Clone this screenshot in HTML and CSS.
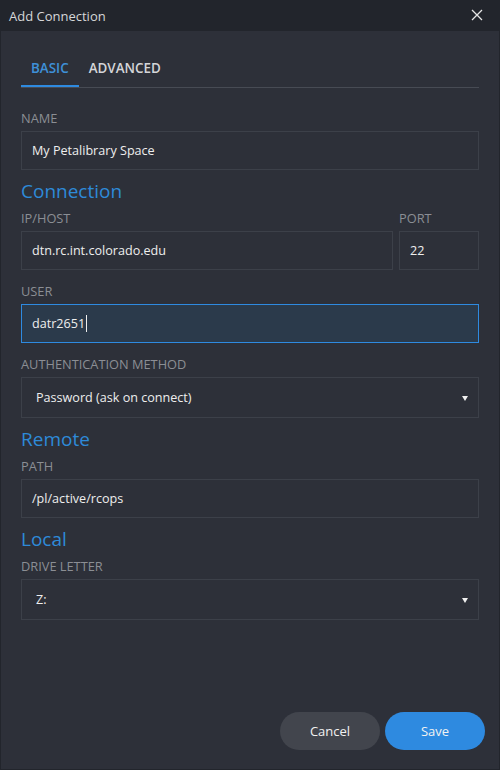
FILE: index.html
```html
<!DOCTYPE html>
<html>
<head>
<meta charset="utf-8">
<link rel="stylesheet" href="styles.css">
</head>
<body>
<div class="window">
  <div class="titlebar">
    <span class="title">Add Connection</span>
    <svg class="close" width="12" height="12" viewBox="0 0 12 12"><path d="M1 1L11 11M11 1L1 11" stroke="#e6e6e6" stroke-width="1.3" fill="none"/></svg>
  </div>
  <div class="content">
    <div class="tabs">
      <div class="tab active">BASIC</div>
      <div class="tab">ADVANCED</div>
    </div>
    <div class="field first">
      <div class="label">NAME</div>
      <div class="input">My Petalibrary Space</div>
    </div>
    <div class="heading">Connection</div>
    <div class="row">
      <div class="field tight host">
        <div class="label">IP/HOST</div>
        <div class="input">dtn.rc.int.colorado.edu</div>
      </div>
      <div class="field tight port">
        <div class="label">PORT</div>
        <div class="input">22</div>
      </div>
    </div>
    <div class="field">
      <div class="label">USER</div>
      <div class="input focused">datr2651<span class="caret"></span></div>
    </div>
    <div class="field">
      <div class="label">AUTHENTICATION METHOD</div>
      <div class="select">Password (ask on connect)<span class="arrow"></span></div>
    </div>
    <div class="heading">Remote</div>
    <div class="field tight">
      <div class="label">PATH</div>
      <div class="input">/pl/active/rcops</div>
    </div>
    <div class="heading">Local</div>
    <div class="field tight">
      <div class="label">DRIVE LETTER</div>
      <div class="select">Z:<span class="arrow"></span></div>
    </div>
    <div class="spacer"></div>
    <div class="footer">
      <button class="btn cancel">Cancel</button>
      <button class="btn save">Save</button>
    </div>
  </div>
</div>
</body>
</html>
```
FILE: styles.css
```css
* { box-sizing: border-box; }
html, body { margin: 0; padding: 0; }
body {
  background: #22252c;
  font-family: "Segoe UI", "Open Sans", "Noto Sans", sans-serif;
  font-size: 13px;
  color: #e6e6e6;
}
.window {
  width: 500px;
  height: 770px;
  display: flex;
  flex-direction: column;
  background: #22252c;
}
.titlebar {
  height: 31px;
  flex: none;
  display: flex;
  align-items: center;
  justify-content: space-between;
  padding: 0 17px 0 9px;
}
.title {
  font-size: 13px;
  color: #d6d7d9;
}
.close { display: block; margin-top: -2px; }
.content {
  flex: 1;
  margin: 0 1px 1px 1px;
  background: #2d3039;
  padding: 20px 20px 19px 20px;
  display: flex;
  flex-direction: column;
}
.tabs {
  display: flex;
  border-bottom: 1px solid #474b54;
  height: 37px;
}
.tab {
  padding: 0 10px;
  height: 36px;
  line-height: 34px;
  font-size: 13.4px;
  font-weight: 600;
  color: #d4d5d8;
  border-bottom: 2px solid transparent;
}
.tab.active {
  color: #3e90d8;
  border-bottom-color: #2e8ae0;
}
.field { margin-top: 13px; }
.field.first { margin-top: 22px; }
.field.tight { margin-top: 7px; }
.label {
  font-size: 12.8px;
  line-height: 16px;
  color: #8b8e94;
  margin-bottom: 5px;
}
.input {
  height: 39px;
  border: 1px solid #3c4049;
  padding: 0 10px;
  display: flex;
  align-items: center;
  color: #eeeeee;
  font-size: 12.6px;
}
.input.focused {
  background: #2b3a4b;
  border-color: #2e8ae0;
}
.caret {
  display: inline-block;
  width: 1px;
  height: 17px;
  background: #eeeeee;
  margin-left: 1px;
}
.select {
  height: 41px;
  border: 1px solid #3c4049;
  padding: 0 10px 0 14px;
  display: flex;
  align-items: center;
  justify-content: space-between;
  color: #eeeeee;
  font-size: 12.6px;
}
.arrow {
  width: 0;
  height: 0;
  border-left: 3px solid transparent;
  border-right: 3px solid transparent;
  border-top: 5px solid #f0f0f0;
  margin-top: 1px;
}
.heading {
  margin-top: 9px;
  font-size: 19px;
  line-height: 24px;
  color: #2e8ad8;
}
.row {
  display: flex;
  gap: 6px;
}
.host { flex: 1; }
.port { width: 80px; flex: none; }
.spacer { flex: 1; }
.footer {
  display: flex;
  justify-content: flex-end;
  gap: 5px;
  margin-right: -6px;
}
.btn {
  width: 100px;
  height: 38px;
  border: none;
  border-radius: 19px;
  font-family: inherit;
  font-size: 13px;
  color: #f2f2f2;
}
.cancel { background: #42454d; }
.save { background: #2e8ae0; }
```
